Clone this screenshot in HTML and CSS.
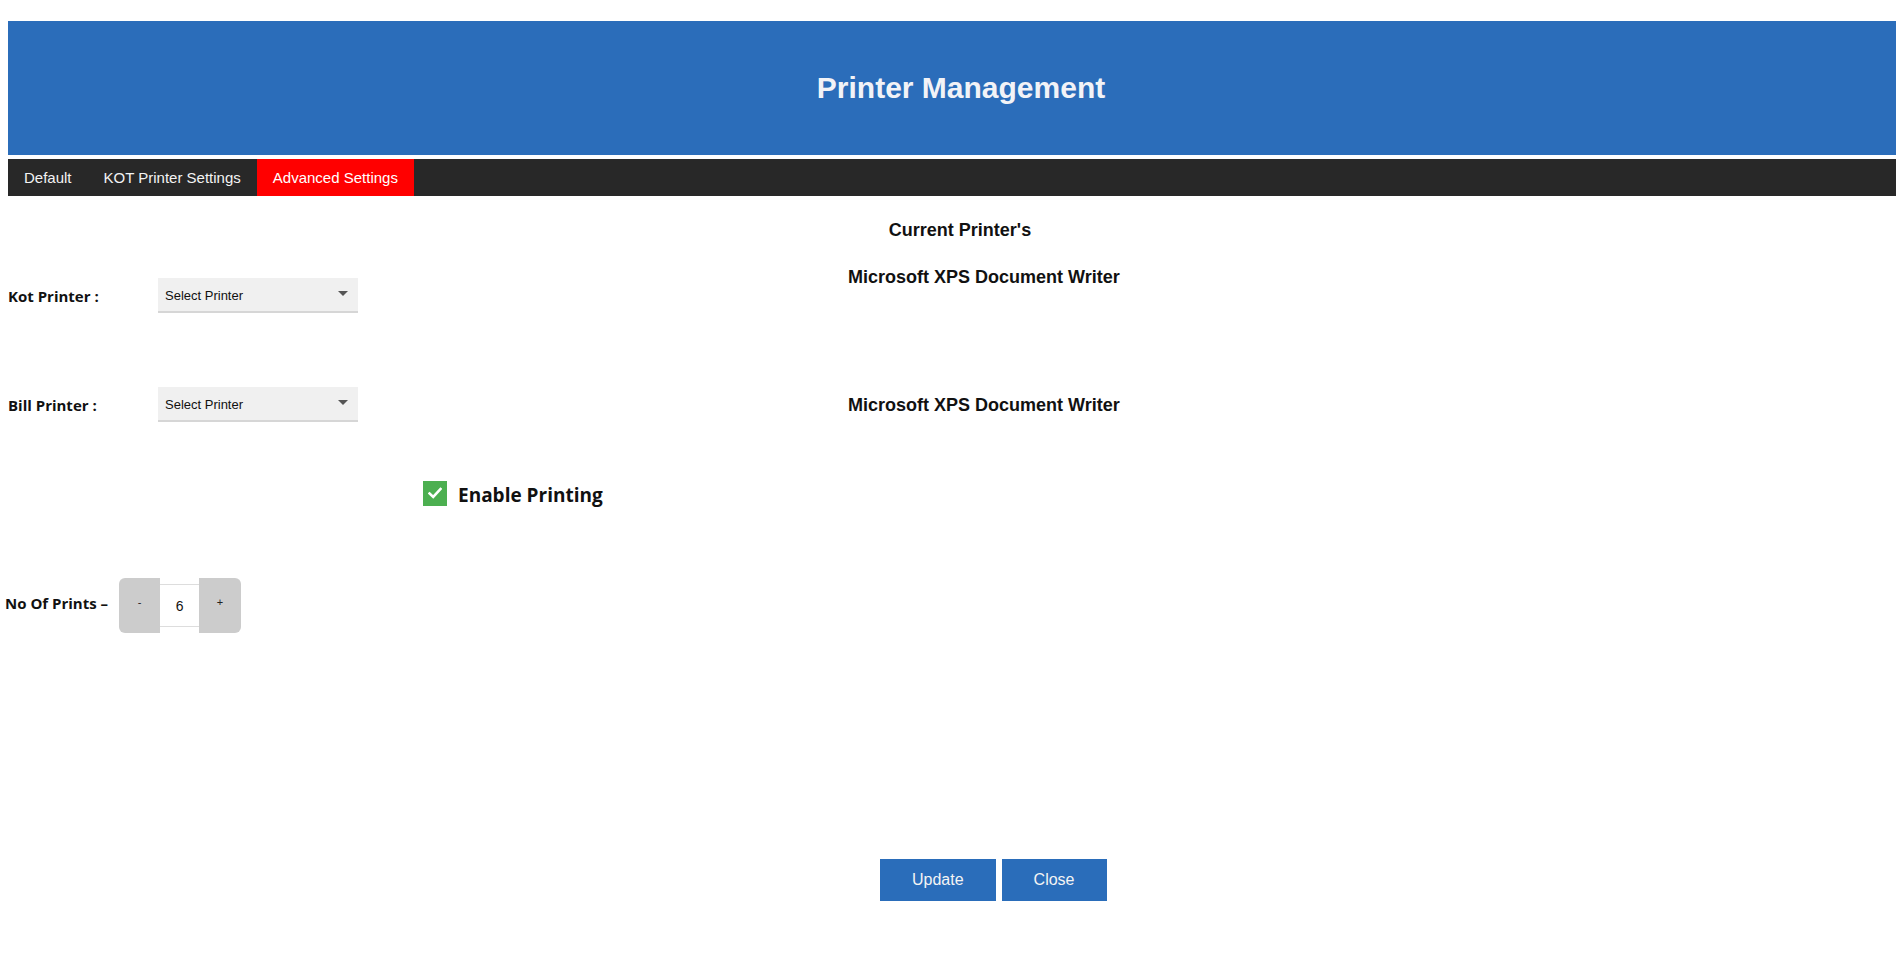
FILE: index.html
```html
<!DOCTYPE html>
<html lang="en">
<head>
<meta charset="utf-8">
<title>Printer Management</title>
<link rel="stylesheet" href="styles.css">
</head>
<body>
<div class="page">
  <header class="header">
    <h1 class="title">Printer Management</h1>
  </header>
  <nav class="tabs">
    <span class="tab">Default</span>
    <span class="tab">KOT Printer Settings</span>
    <span class="tab active">Advanced Settings</span>
  </nav>

  <main class="content">
    <h2 class="current-heading">Current Printer's</h2>

    <div class="printer-row first">
      <div class="field">
        <label class="label">Kot Printer :</label>
        <div class="select"><span>Select Printer</span><span class="caret"></span></div>
      </div>
      <div class="printer-name">Microsoft XPS Document Writer</div>
    </div>

    <div class="printer-row second">
      <div class="field">
        <label class="label">Bill Printer :</label>
        <div class="select"><span>Select Printer</span><span class="caret"></span></div>
      </div>
      <div class="printer-name">Microsoft XPS Document Writer</div>
    </div>

    <div class="enable-row">
      <span class="checkbox">
        <svg width="14" height="12" viewBox="0 0 14 12"><path d="M1.5 6.5 L5.2 10 L12.5 2" fill="none" stroke="#fff" stroke-width="2.6" stroke-linecap="square"/></svg>
      </span>
      <span class="enable-text">Enable Printing</span>
    </div>

    <div class="prints-row">
      <span class="label prints-label">No Of Prints –</span>
      <div class="stepper">
        <span class="step minus">-</span>
        <span class="step-value">6</span>
        <span class="step plus">+</span>
      </div>
    </div>

    <div class="actions">
      <button class="btn">Update</button>
      <button class="btn">Close</button>
    </div>
  </main>
</div>
</body>
</html>
```

FILE: styles.css
```css
html, body {
  margin: 0;
  padding: 0;
  background: #ffffff;
  font-family: "Liberation Sans", Arial, sans-serif;
  color: #111;
  overflow: hidden;
}

.page {
  padding: 21px 0 0 8px;
}

.header {
  background: #2b6dba;
  height: 134px;
  display: flex;
  align-items: center;
  justify-content: center;
  padding-left: 18px;
}

.title {
  margin: 0;
  color: #f2f3f7;
  font-size: 30px;
  font-weight: 700;
  line-height: 34px;
}

.tabs {
  margin-top: 4px;
  background: #282828;
  height: 37px;
  display: flex;
  align-items: stretch;
}

.tab {
  display: flex;
  align-items: center;
  padding: 0 16px;
  color: #f3f3f3;
  font-size: 15px;
}

.tab.active {
  background: #ff0000;
  color: #ffffff;
}

.content {
  padding-bottom: 40px;
}

.current-heading {
  margin: 24px 0 0;
  text-align: center;
  padding-left: 16px;
  font-size: 18px;
  font-weight: 700;
  line-height: 21px;
  color: #111;
}

.printer-row {
  display: flex;
}

.printer-row.first {
  margin-top: 26px;
  align-items: flex-start;
}

.printer-row.first .field {
  margin-top: 11px;
}

.printer-row.second {
  margin-top: 74px;
  align-items: center;
}

.printer-row.second .printer-name {
  position: relative;
  top: 1px;
}

.field {
  display: flex;
  align-items: center;
  width: 840px;
}

.label {
  font-family: "Open Sans", "Liberation Sans", sans-serif;
  font-weight: 700;
  font-size: 15px;
  color: #111;
  width: 150px;
  white-space: nowrap;
}

.select {
  width: 200px;
  height: 33px;
  box-sizing: content-box;
  background: #f0f0f0;
  border-bottom: 2px solid #d6d6d6;
  display: flex;
  align-items: center;
  justify-content: space-between;
  padding: 0;
  font-size: 13px;
  color: #111;
}

.select span:first-child {
  padding-left: 7px;
  padding-top: 2px;
}

.caret {
  width: 0;
  height: 0;
  border-left: 5px solid transparent;
  border-right: 5px solid transparent;
  border-top: 5px solid #555;
  margin-right: 10px;
  margin-top: -2px;
}

.printer-name {
  font-size: 18px;
  font-weight: 700;
  line-height: 21px;
  color: #111;
}

.enable-row {
  margin-top: 58px;
  margin-left: 415px;
  display: flex;
  align-items: center;
  height: 26px;
}

.checkbox {
  width: 24px;
  height: 25px;
  background: #4caf50;
  display: flex;
  align-items: center;
  justify-content: center;
}

.enable-text {
  margin-left: 11px;
  font-family: "Comic Sans MS", "Open Sans", sans-serif;
  font-weight: 700;
  font-size: 19px;
  color: #111;
  position: relative;
  top: 2px;
}

.prints-row {
  margin-top: 72px;
  margin-left: -3px;
  display: flex;
  align-items: center;
}

.prints-label {
  width: auto;
  margin-right: 11px;
  position: relative;
  top: -3px;
}

.stepper {
  display: flex;
  align-items: center;
}

.step {
  width: 41px;
  height: 55px;
  background: #cccccc;
  display: flex;
  align-items: center;
  justify-content: center;
  font-size: 11px;
  color: #222;
  padding-bottom: 8px;
  box-sizing: border-box;
}

.minus {
  border-radius: 6px 0 0 6px;
}

.plus {
  width: 42px;
  border-radius: 0 6px 6px 0;
}

.step-value {
  width: 39px;
  height: 43px;
  box-sizing: border-box;
  border-top: 1px solid #dddddd;
  border-bottom: 1px solid #dddddd;
  background: #fff;
  display: flex;
  align-items: center;
  justify-content: center;
  font-size: 14px;
  color: #111;
}

.actions {
  margin-top: 226px;
  margin-left: 872px;
  display: flex;
  gap: 6px;
}

.btn {
  height: 42px;
  padding: 0 32px;
  border: none;
  background: #2a6dba;
  color: #f4f4f4;
  font-family: "Liberation Sans", Arial, sans-serif;
  font-size: 16px;
  cursor: pointer;
}
```
